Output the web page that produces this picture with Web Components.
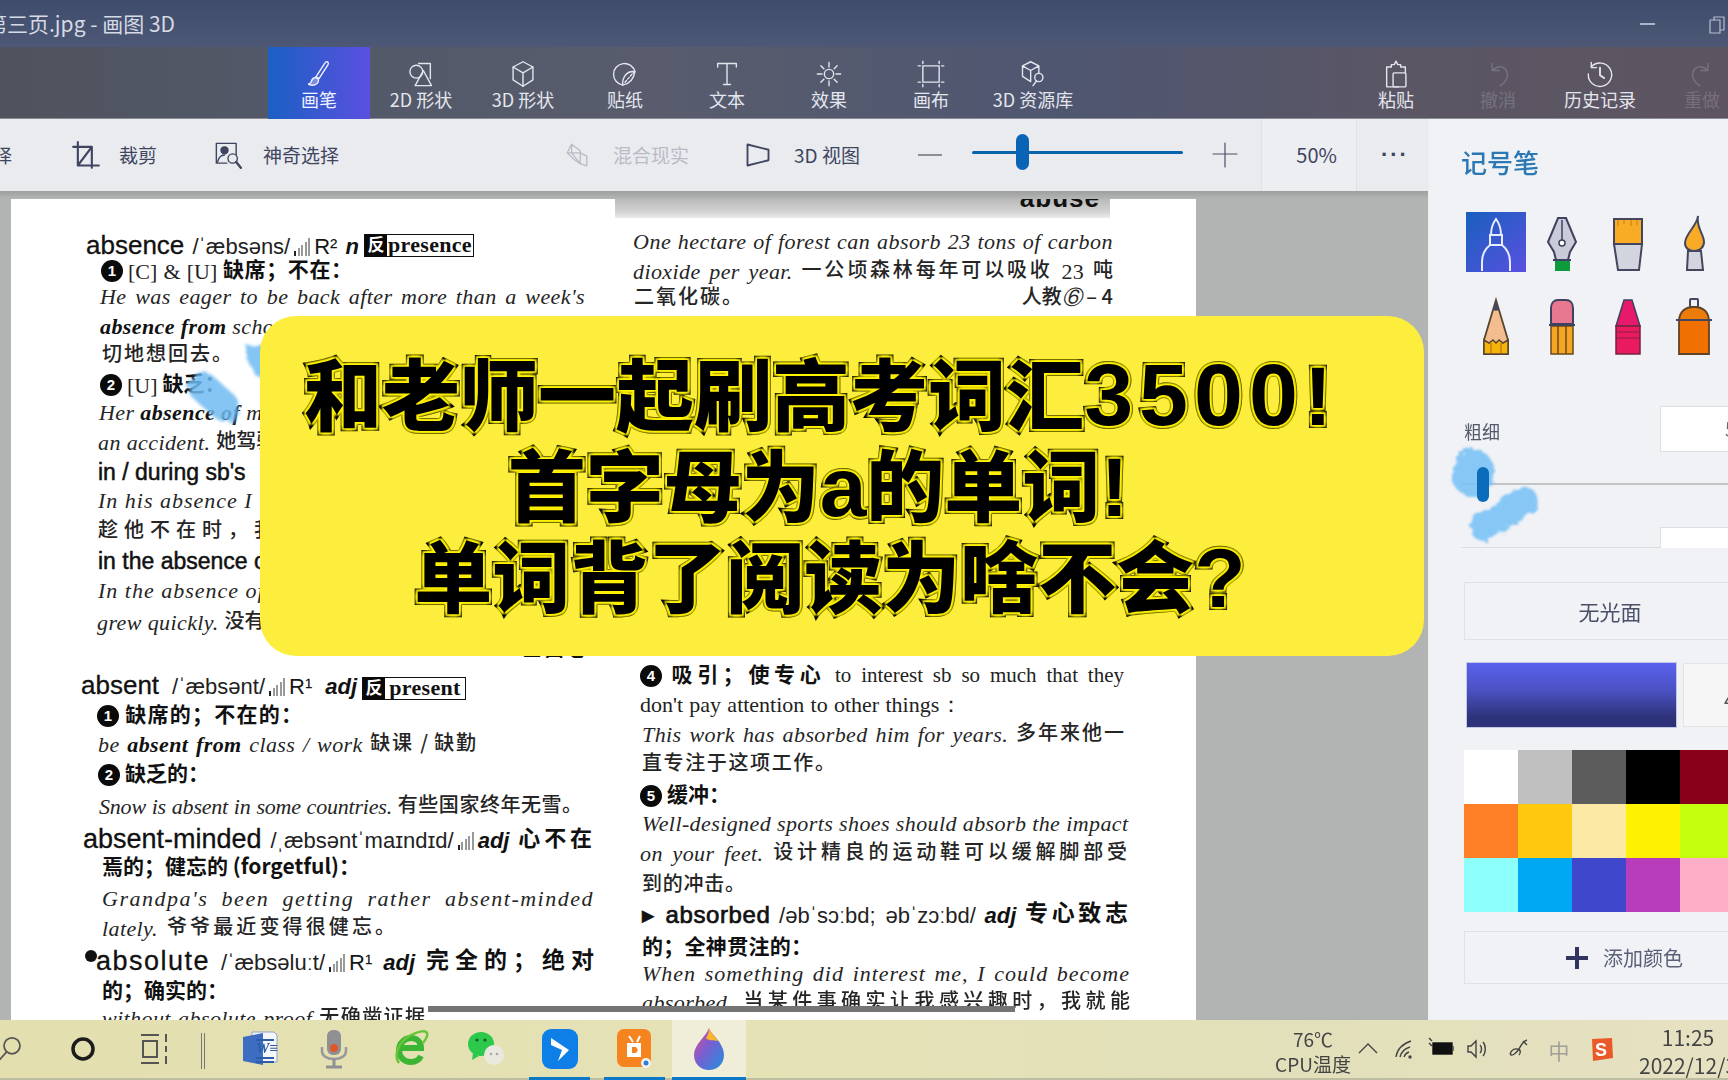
<!DOCTYPE html>
<html lang="zh"><head><meta charset="utf-8"><title>画图 3D</title>
<style>html,body{margin:0;padding:0;background:#b2b3b3;overflow:hidden}</style></head>
<body><paint-app></paint-app>
<script>
const UI='"Noto Sans CJK SC","Noto Sans",sans-serif';
const base=(css,html)=>`<style>${css}</style>${html}`;
function el(name,render){customElements.define(name,class extends HTMLElement{connectedCallback(){if(this.shadowRoot)return;this.attachShadow({mode:'open'}).innerHTML=render(this)}})}
const S=(inner,w=28,h=28,vb='0 0 24 24',extra='')=>`<svg width="${w}" height="${h}" viewBox="${vb}" fill="none" stroke="currentColor" stroke-width="1.2" stroke-linecap="round" stroke-linejoin="round" ${extra}>${inner}</svg>`;
const RI={
brush:S('<path d="M19 1.500c1.200.6 1.200 1.400.6 2.600L12 16l-2.600-1.600L17 2.600c.6-1 1.200-1.400 2-1.100z"/><path d="M9 15c-2 .2-3 1.300-3.400 3-.3 1.400-1.100 2.200-2.600 2.800 2.600 1 6 .9 7.700-1 1.200-1.500 1.100-3.200-.2-4z" fill="currentColor" fill-opacity=".35"/>'),
shape:S('<circle cx="8" cy="10" r="5.500"/><path d="M10 3h10v13"/><path d="M14 9l7 13H7z"/>'),
cube:S('<path d="M12 1.500l8.500 4.500v11L12 22.500 3.500 17V6z"/><path d="M3.500 6L12 11l8.500-5M12 11v11.500"/>'),
sticker:S('<path d="M20.500 10A9.300 9.300 0 1 0 10 21.500"/><path d="M20.500 10C14 9 9.500 14 10 21.500c5.500-1 9.500-5 10.500-11.500z"/><path d="M12 19l8-9" stroke-dasharray="2 1.500"/>'),
text:S('<path d="M4 6V3h16v3M12 3v18M9 21h6"/>'),
sun:S('<circle cx="12" cy="12" r="4"/><path d="M12 2v4M12 18v4M2 12h4M18 12h4M5 5l2.600 2.600M16.400 16.400L19 19M19 5l-2.600 2.600M7.600 16.400L5 19"/>'),
canvas:S('<rect x="5" y="5" width="14" height="14"/><path d="M5 1v2M19 1v2M5 21v2M19 21v2M1 5h2M1 19h2M21 5h2M21 19h2" stroke-dasharray="2 1"/>'),
lib:S('<path d="M10 1.500l7 3.500v6M3 5l7-3.500M3 5v9l7 4.500M3 5l7 4 7-4M10 9v9.500"/><circle cx="17" cy="15" r="3.500"/><path d="M15 18l-3 4"/>'),
paste:S('<path d="M8 6H4v17h10M8 6V4h2.500L12 1l1.500 3H16v2M16 6h4v5"/><rect x="9.500" y="11" width="11" height="12" rx="1"/>'),
undo:S('<path d="M7 9c6-6 13-3 13 4 0 4-3 7-6 9M7 9V3M7 9h6"/>'),
redo:S('<path d="M17 9c-6-6-13-3-13 4 0 4 3 7 6 9M17 9V3M17 9h-6"/>'),
hist:S('<path d="M4.500 6A10 10 0 1 1 2 12M4.500 2v4.500H9"/><path d="M12 6.500V13l3.500 2.500" stroke-width="1.600"/>')};
const AI={
crop:S('<path d="M5 1v20h18M1 5h16v18M17 5L5 21" stroke-width="1.800"/>',28,28),
magic:S('<path d="M19 12V2H2v17h9"/><circle cx="9" cy="8" r="3" fill="currentColor"/><path d="M3 18c1-4 3-6 6-6"/><circle cx="16" cy="15" r="4"/><path d="M19 18l4 5" stroke-width="2"/>',28,28),
mixed:S('<path d="M7 2l8 6v12l-6-4-6-6zM7 2v8l8 10M3 10h12l6 3v9l-6-2" />',26,26),
view:S('<path d="M3 3l18 4.500v9L3 21z" stroke-width="1.600"/>',28,28)};
el('rib-item',h=>base(`:host{display:flex;flex:none;width:102px;height:72px;flex-direction:column;align-items:center;color:${h.hasAttribute('off')?'rgba(230,232,240,.2)':'#e4e6ee'};font:400 18px/20px ${UI}}
:host([on]){background:linear-gradient(90deg,#1b60c2,#5a50e0);color:#f0f2ff}
.i{height:28px;margin-top:13px;display:flex}.l{margin-top:1px;white-space:nowrap}`,
`<span class="i">${RI[h.getAttribute('i')]}</span><span class="l"><slot></slot></span>`));
el('title-bar',()=>base(`:host{display:flex;align-items:center;height:47px;background:linear-gradient(180deg,#3f4c6c,#4c5875);color:#d6dae5;font:400 21px/47px ${UI};overflow:hidden;white-space:nowrap}
.t{margin-left:-14px;flex:none}.min{margin-left:1465px;width:15px;height:2px;background:#aeb4c4;flex:none}
.max{margin-left:52px;flex:none;color:#b8bdcc;display:flex}`,
`<span class="t">第三页.jpg - 画图 3D</span><span class="min"></span><span class="max">${S('<rect x="2" y="7" width="10" height="13"/><path d="M6 7V4h10v13h-4"/>',20,22,'0 0 18 22')}</span>`));
el('ribbon-bar',()=>base(`:host{display:flex;height:72px;padding-left:268px;overflow:hidden;background:linear-gradient(90deg,#4f535d 0,#525867 15%,#585c6d 38%,#4f5670 62%,#5b5664 82%,#5d5461 100%);box-shadow:inset 0 -1px 0 #8a8d98}.gap{flex:none;width:261px}`,
`<rib-item i="brush" on>画笔</rib-item><rib-item i="shape">2D 形状</rib-item><rib-item i="cube">3D 形状</rib-item><rib-item i="sticker">贴纸</rib-item><rib-item i="text">文本</rib-item><rib-item i="sun">效果</rib-item><rib-item i="canvas">画布</rib-item><rib-item i="lib">3D 资源库</rib-item><span class="gap"></span><rib-item i="paste">粘贴</rib-item><rib-item i="undo" off>撤消</rib-item><rib-item i="hist">历史记录</rib-item><rib-item i="redo" off>重做</rib-item>`));
el('act-item',h=>base(`:host{display:flex;flex:none;align-items:center;gap:${h.getAttribute('g')||23}px;margin-left:${h.getAttribute('m')||0}px;color:${h.hasAttribute('off')?'#b9bcc6':'#3f4560'};font:400 19px/24px ${UI};white-space:nowrap}`,
`<span style="display:flex">${h.getAttribute('i')?AI[h.getAttribute('i')]:''}</span><span><slot></slot></span>`));
el('action-bar',()=>base(`:host{display:flex;align-items:center;height:72px;background:#e9ebef;overflow:hidden;color:#3f4560;font:400 19px/24px ${UI};white-space:nowrap}
.cut{margin-left:-7px;flex:none;width:19px}
.minus{margin-left:58px;flex:none;width:24px;height:2px;background:#8b8e98}
.sl{margin-left:30px;flex:none;width:211px;height:3px;background:#0a64ac;border-radius:2px;position:relative;top:-3px;display:flex;align-items:center}
.th{margin-left:44px;width:13px;height:36px;border-radius:7px;background:#0a64b6;flex:none}
.plus{margin-left:29px;flex:none;display:flex;color:#4a4f66}
.pct{margin-left:23px;flex:none;width:75px;padding-right:19px;align-self:stretch;background:#eceef1;border:solid #dfe1e5;border-width:0 1px;display:flex;align-items:center;justify-content:flex-end;font-size:20px;color:#3f4560}
.dots{margin-left:24px;flex:none;letter-spacing:2px;font:700 22px/22px "Liberation Sans",sans-serif}`,
`<span class="cut">择</span><act-item i="crop" m="60" g="19">裁剪</act-item><act-item i="magic" m="57" g="21">神奇选择</act-item><act-item i="mixed" off m="225" g="23">混合现实</act-item><act-item i="view" m="55" g="22">3D 视图</act-item><span class="minus"></span><span class="sl"><span class="th"></span></span><span class="plus">${S('<path d="M12 1v24M0 12h24"/>',26,26,'0 0 24 26')}</span><span class="pct">50%</span><span class="dots">···</span>`));
el('sig-bars',()=>base(`:host{display:inline-flex;align-items:flex-end;gap:1.500px;height:18px;vertical-align:-2px;margin:0 4px}i{width:2px;background:#999}i:nth-child(-n+2){background:#222}`,
`<i style="height:5px"></i><i style="height:8px"></i><i style="height:11px"></i><i style="height:14px"></i><i style="height:18px"></i>`));
el('num-dot',()=>base(`:host{display:inline-flex;align-items:center;justify-content:center;width:22px;height:22px;border-radius:50%;background:#0a0a0a;color:#fff;font:700 15px/22px "Liberation Sans",sans-serif;font-style:normal;text-align:center;text-align-last:center;vertical-align:3px;margin-right:5px}`,`<slot></slot>`));
el('anto-tag',h=>base(`:host{display:inline-flex;align-items:stretch;height:23px;border:1.500px solid #111;box-sizing:border-box;width:${h.getAttribute('w')}px;margin-left:5px;vertical-align:middle;background:#fff;position:relative;top:${h.getAttribute('dy')||0}px;text-align-last:center}
.a{flex:none;width:22px;background:#0a0a0a;color:#fff;font:700 17px/20px ${UI};text-align:center;margin:-1px 0}.b{flex:1;text-align:center;font:700 22px/19px "Liberation Serif",serif;color:#111;font-style:normal;letter-spacing:.3px}`,
`<span class="a">反</span><span class="b"><slot></slot></span>`));
const CSS=`:host{display:block;flex:none}
.r{height:28px;line-height:28px;white-space:nowrap;color:#161616;font:700 20px/28px "Liberation Serif","Noto Sans CJK SC",serif;box-sizing:border-box}
.j{text-align:justify;text-align-last:justify}.w{text-justify:inter-word}
.h{font:400 26px/28px "Liberation Sans","Noto Sans CJK SC",sans-serif;color:#111;-webkit-text-stroke:.3px #111}
.h2{font-size:27px}
.ph{font:400 22px/28px "Liberation Sans",sans-serif;color:#222}
.g{font:400 22px/28px "Liberation Sans",sans-serif}
.s{font:400 23px/28px "Liberation Sans",sans-serif;color:#111;-webkit-text-stroke:.5px #111}
.ss{font:400 24px/28px "Liberation Sans",sans-serif;color:#111;-webkit-text-stroke:.7px #111;letter-spacing:.6px}
.ai{font:italic 700 22px/28px "Liberation Sans",sans-serif;color:#111}
.e{font:italic 400 22px/28px "Liberation Serif","Noto Sans CJK SC",serif;color:#252525;letter-spacing:.4px}
.e b{font-weight:700;color:#111}
.c{font:500 20px/28px "Noto Sans CJK SC",sans-serif;font-style:normal;color:#252525;letter-spacing:0;position:relative;top:-2px}
.d{font:700 21px/28px "Noto Sans CJK SC",sans-serif;color:#111;position:relative;top:-2px}
.t{font:400 22px/28px "Liberation Serif",serif;color:#222}
.sp{display:flex;justify-content:space-between;text-align-last:left}
.dot{display:inline-block;width:12px;height:12px;border-radius:50%;background:#111;vertical-align:8px;margin-right:-1px}`;
const LEFT=[
[245,86,388,`<span class="h">absence</span> <span class="ph">/ˈæbsəns/</span><sig-bars></sig-bars><span class="g">R²</span> <span class="ai">n</span><anto-tag w="110" dy="-4">presence</anto-tag>`,'w'],
[270,101,251,`<num-dot>1</num-dot><span class="t">[C] &amp; [U]</span> <span class="d">缺席；不在：</span>`,'w'],
[297,100,485,`<span class="e">He was eager to be back after more than a week's</span>`],
[327,100,0,`<span class="e"><b>absence from</b> school</span>`],
[355,102,0,`<span class="c" style="letter-spacing:2px">切地想回去。</span>`],
[384,100,0,`<num-dot>2</num-dot><span class="t">[U]</span> <span class="d">缺乏：</span>`],
[413,99,0,`<span class="e">Her <b>absence of</b> m</span>`],
[442,98,0,`<span class="e">an accident. <span class="c">她驾驶</span></span>`],
[472,98,0,`<span class="s">in / during sb's</span>`],
[501,98,0,`<span class="e" style="letter-spacing:1px">In his absence I l</span>`],
[531,98,0,`<span class="c" style="letter-spacing:6px">趁他不在时，我</span>`],
[561,98,0,`<span class="s">in the absence o</span>`],
[591,98,0,`<span class="e" style="letter-spacing:1px">In the absence of</span>`],
[622,97,0,`<span class="e">grew quickly. <span class="c">没有</span></span>`],
[650,470,116,`<span class="d" style="font-size:19px">2017 全国卷</span>`,'w'],
[685,81,385,`<span class="h">absent</span> <span class="ph">/ˈæbsənt/</span><sig-bars></sig-bars><span class="g">R¹</span> <span class="ai">adj</span><anto-tag w="104" dy="-1">present</anto-tag>`,'w'],
[715,97,205,`<num-dot>1</num-dot><span class="d">缺席的；不在的：</span>`],
[744,98,378,`<span class="e">be <b>absent from</b> class / work <span class="c">缺课 / 缺勤</span></span>`],
[774,98,0,`<num-dot>2</num-dot><span class="d">缺乏的：</span>`],
[806,99,483,`<span class="e" style="letter-spacing:-.2px">Snow is absent in some countries. <span class="c">有些国家终年无雪。</span></span>`,'w'],
[838,83,509,`<span class="h h2">absent-minded</span> <span class="ph">/ˌæbsəntˈmaɪndɪd/</span><sig-bars></sig-bars><span class="ai">adj</span> <span class="d" style="font-size:22px">心不在</span>`,'w'],
[867,102,258,`<span class="d">焉的；健忘的 (forgetful)：</span>`,'w'],
[899,102,492,`<span class="e" style="letter-spacing:1.500px">Grandpa's been getting rather absent-minded</span>`],
[928,102,293,`<span class="e">lately. <span class="c">爷爷最近变得很健忘。</span></span>`],
[960,85,509,`<span class="h h2" style="letter-spacing:1.500px"><span class="dot"></span>absolute</span> <span class="ph">/ˈæbsəluːt/</span><sig-bars></sig-bars><span class="g">R¹</span> <span class="ai">adj</span> <span class="d" style="font-size:23px">完全的；绝对</span>`,'w'],
[991,102,126,`<span class="d">的；确实的：</span>`],
[1018,102,323,`<span class="e">without absolute proof <span class="c">无确凿证据</span></span>`]];
const RIGHT=[
[242,633,480,`<span class="e" style="letter-spacing:.5px">One hectare of forest can absorb 23 tons of carbon</span>`],
[271,633,480,`<span class="e">dioxide per year. <span class="c">一公顷森林每年可以吸收</span> <span style="font-style:normal">23</span> <span class="c">吨</span></span>`],
[298,634,479,`<span class="sp"><span class="c" style="letter-spacing:2px">二氧化碳。</span><span class="c">人教<i style="font-family:'Liberation Serif'">⑥</i> – 4</span></span>`,'n'],
[675,640,484,`<num-dot>4</num-dot><span class="d">吸引；使专心</span> <span class="t" style="font-size:21px;position:relative;top:-2px">to interest sb so much that they</span>`,'w'],
[705,640,322,`<span class="t">don't pay attention to other things：</span>`],
[734,642,482,`<span class="e">This work has absorbed him for years. <span class="c">多年来他一</span></span>`],
[764,642,193,`<span class="c">直专注于这项工作。</span>`],
[795,640,85,`<num-dot>5</num-dot><span class="d">缓冲：</span>`,'w'],
[824,642,485,`<span class="e">Well-designed sports shoes should absorb the impact</span>`],
[853,640,487,`<span class="e">on your feet. <span class="c">设计精良的运动鞋可以缓解脚部受</span></span>`],
[885,642,103,`<span class="c">到的冲击。</span>`],
[913,642,486,`<span class="ss">▸ absorbed</span> <span class="ph">/əbˈsɔːbd; əbˈzɔːbd/</span> <span class="ai">adj</span> <span class="d" style="font-size:23px">专心致志</span>`,'w'],
[947,642,170,`<span class="d">的；全神贯注的：</span>`],
[974,642,488,`<span class="e" style="letter-spacing:1px">When something did interest me, I could become</span>`],
[1002,642,488,`<span class="e">absorbed. <span class="c">当某件事确实让我感兴趣时，我就能</span></span>`]];
function rows(list,colX,startY){let prev=null,out='';for(const [y,x,w,h,f] of list){const m=prev===null?y-14-startY:y-prev-28;prev=y;
const cls=f=='n'?'':(w?' j':'')+(f=='w'?' w':'');
out+=`<div class="r${cls}" style="margin-top:${m}px;margin-left:${x-colX}px;${w?`width:${w}px`:''}">${h}</div>`}return out}
el('dict-col',h=>{const l=h.getAttribute('side')=='l';return base(CSS,rows(l?LEFT:RIGHT,l?11:611,l?199:219))});
const ROUGH=(id,d)=>`<filter id="${id}" filterUnits="userSpaceOnUse" x="0" y="0" width="100%" height="100%"><feTurbulence type="fractalNoise" baseFrequency=".12" numOctaves="3" seed="4"/><feDisplacementMap in="SourceGraphic" scale="10"/><feGaussianBlur stdDeviation="${d}"/></filter>`;
el('doc-canvas',()=>base(`:host{display:block;position:relative;height:829px;background:#b2b3b3;overflow:hidden;padding:8px 0 0 11px;box-sizing:border-box}
:host::before{content:"";position:absolute;left:0;right:0;top:0;height:8px;background:linear-gradient(#9d9e9e,#b4b5b5)}
.paper{position:relative;width:1185px;height:821px;background:#fff;overflow:hidden;display:flex}
.lc{flex:none;width:600px}.rc{flex:none;width:585px;padding-top:20px;box-sizing:border-box}
.band{position:absolute;left:604px;top:0;width:495px;height:19px;background:linear-gradient(180deg,#b9b9b9,#d4d4d4 70%,#ececec);display:flex;justify-content:flex-end;overflow:hidden;padding-right:10px;box-sizing:border-box;font:700 26px/1 "Liberation Sans",sans-serif;color:#111}
.band span{margin-top:-14px;letter-spacing:1px}
.sc{position:absolute;left:0;top:0;pointer-events:none}
.thumb{position:absolute;left:428px;top:815px;width:587px;height:6px;background:#747474;z-index:3}`,
`<div class="paper"><div class="lc"><dict-col side="l"></dict-col></div><div class="rc"><dict-col side="r"></dict-col></div><div class="band"><span>abuse</span></div>
<svg class="sc" width="320" height="260" fill="none" stroke-linecap="round"><defs>${ROUGH('b',1.5)}</defs><g filter="url(#b)" stroke="#6fbbf2" opacity=".85"><path d="M192 188L214 208" stroke-width="30"/><path d="M246 155L254 170" stroke-width="22"/></g></svg>
</div><div class="thumb"></div>`));
const TOOL={
pen:`<path d="M26 6h8l10 24-6 10-2 8H24l-2-8-6-10z" fill="#c9cbd8" stroke="#3f4160" stroke-width="2"/><path d="M30 8v20" stroke="#3f4160" stroke-width="1.500"/><circle cx="30" cy="31" r="3" fill="#fff" stroke="#3f4160" stroke-width="1.500"/><rect x="23" y="48" width="15" height="11" fill="#0d9b3e"/><path d="M21 48h18" stroke="#3f4160" stroke-width="2"/>`,
flat:`<path d="M16 7h28v25H16z" fill="#f8ac26" stroke="#44465f" stroke-width="2"/><path d="M16 32h28l-3 26H20z" fill="#d2d4de" stroke="#44465f" stroke-width="2"/><path d="M20 8v6M26 8v4M33 8v6M39 8v5" stroke="#c77f10"/>`,
water:`<path d="M34 4C33 14 21 22 21 31c0 5 4 8 9 8s10-3 10-9c0-8-8-14-6-26z" fill="#f9ab28" stroke="#44465f" stroke-width="2"/><path d="M24 39h13l2 19H23z" fill="#d2d4de" stroke="#44465f" stroke-width="2"/>`,
pencil:`<path d="M30 4l12 40v14H18V44z" fill="#f3bd90" stroke="#59462f" stroke-width="1.800"/><path d="M27 14l3-10 3 10c-2 1-4 1-6 0z" fill="#44465f"/><path d="M18 58V44l5 3 4-3 3 3 3-3 4 3 5-3v14z" fill="#f7b30c" stroke="#59462f" stroke-width="1.500"/><path d="M25 47v11M35 47v11" stroke="#a86b10"/>`,
eraser:`<path d="M19 28V12c0-5 3-8 7-8h8c4 0 7 3 7 8v16z" fill="#e87790" stroke="#3f4160" stroke-width="2"/><path d="M19 30h22v28H19z" fill="#f5a623" stroke="#6b4a1d" stroke-width="1.500"/><path d="M26 30v28M34 30v28" stroke="#6b4a1d" stroke-width="1.500"/><path d="M17 29h26" stroke="#3f4160" stroke-width="2"/>`,
crayon:`<path d="M26 4h8l8 26H18z" fill="#e8186a" stroke="#3f4160" stroke-width="1.500"/><path d="M18 30h24v28H18z" fill="#ea1a60" stroke="#74233f" stroke-width="1.500"/><path d="M18 36h24M18 42h24" stroke="#8c1e42" stroke-width="1.200"/>`,
spray:`<rect x="26" y="3" width="8" height="8" rx="1" fill="none" stroke="#44465f" stroke-width="2"/><path d="M15 24c1-9 7-13 15-13s14 4 15 13z" fill="#ec7c0a" stroke="#5f4327" stroke-width="1.800"/><path d="M15 24h30v34H15z" fill="#f07000" stroke="#5f4327" stroke-width="1.800"/><path d="M12 24h36" stroke="#44465f" stroke-width="2"/>`};
el('tool-cell',h=>base(`:host{display:flex;width:60px;height:60px;flex:none}:host([on]){background:linear-gradient(135deg,#1860bd,#5a50e0)}`,
h.hasAttribute('on')?`<svg width="60" height="60" viewBox="0 0 60 60" fill="none" stroke="#e8ecff" stroke-width="2"><path d="M30 7c-3 4-5 9-5 16h10c0-7-2-12-5-16zM24 23h12v10H24zM16 59V50c0-8 3-13 8-17M44 59V50c0-8-3-13-8-17"/></svg>`:`<svg width="60" height="60" viewBox="0 0 60 60">${TOOL[h.getAttribute('t')]}</svg>`));
el('side-panel',()=>{const pal=['#fff','#c0c0c0','#5c5c5c','#000','#880019','#ff7f27','#ffc90e','#fde9a6','#fff200','#c4ff0e','#8cfffb','#00a8f3','#3f48cc','#b83dba','#ffaec8'];
return base(`:host{display:block;height:901px;background:#f0f2f5;overflow:hidden;padding-left:33px;font-family:${UI};color:#4a4f68;box-sizing:border-box;box-shadow:inset 1px 0 0 #eceef0}
.inner{width:300px}
h2{margin:24px 0 0 0;font:500 26px/38px ${UI};color:#2b78b5}
.grid{display:grid;grid-template-columns:repeat(4,60px);column-gap:6px;row-gap:24px;margin:31px 0 0 5px}
.clip{height:141px;margin-top:50px;position:relative;clip-path:inset(0 -100px 0 -100px);border-bottom:1px solid #dcdde0}
.lab{font:400 18px/26px ${UI};color:#555a6a;padding:12px 0 0 3px}
.in{position:absolute;left:199px;width:120px;background:#fff;border:1px solid #dedfe3;box-sizing:border-box;font:400 20px/44px ${UI};padding-left:64px;color:#666}
.track{position:absolute;left:0;top:77px;width:300px;height:2px;background:#c3c4c6}
.th{position:absolute;left:16px;top:61px;width:12px;height:35px;border-radius:6px;background:#0b6cbc}
.sc{position:absolute;left:-20px;top:30px}
.drop{margin:34px 0 0 3px;height:58px;box-sizing:border-box;border:1px solid #e0e1e4;font:400 21px/56px ${UI};text-align:center;width:292px}
.col{display:flex;margin:23px 0 0 6px;gap:7px}
.sw{flex:none;width:209px;height:64px;background:linear-gradient(180deg,#5a62ee,#4a50c0 45%,#2e3278 85%);outline:1px solid #c5c8e4}
.hex{flex:none;width:80px;height:64px;background:#f6f6f6;border:1px solid #e3e4e6;box-sizing:border-box;font:400 20px/72px ${UI};padding-left:40px;color:#555}
.pal{display:grid;grid-template-columns:repeat(5,54px);grid-auto-rows:54px;margin:23px 0 0 3px}
.add{margin:19px 0 0 3px;height:53px;width:292px;box-sizing:border-box;border:1px solid #e0e1e4;display:flex;align-items:center;gap:14px;padding-left:100px;font:400 20px/26px ${UI};color:#5a6078}`,
`<div class="inner"><h2>记号笔</h2>
<div class="grid"><tool-cell on></tool-cell><tool-cell t="pen"></tool-cell><tool-cell t="flat"></tool-cell><tool-cell t="water"></tool-cell><tool-cell t="pencil"></tool-cell><tool-cell t="eraser"></tool-cell><tool-cell t="crayon"></tool-cell><tool-cell t="spray"></tool-cell></div>
<div class="clip"><div class="lab">粗细</div><div class="in" style="top:0;height:46px">5</div><div class="in" style="top:121px;height:40px"></div><div class="track"></div>
<svg class="sc" width="120" height="130" fill="none" stroke-linecap="round"><defs>${ROUGH('p',1.2)}</defs><g filter="url(#p)" stroke="#7cc2f6" opacity=".9"><path d="M32 33L32 41" stroke-width="40"/><path d="M43 91L83 65" stroke-width="28"/></g></svg><div class="th"></div></div>
<div class="drop">无光面</div>
<div class="col"><div class="sw"></div><div class="hex">4</div></div>
<div class="pal">${pal.map(c=>`<i style="background:${c}"></i>`).join('')}</div>
<div class="add"><svg width="24" height="24" viewBox="0 0 24 24"><path d="M12 1v22M1 12h22" stroke="#2f3560" stroke-width="4"/></svg><span>添加颜色</span></div></div>`)});
const TB={
search:`<svg width="40" height="40" viewBox="0 0 40 40" fill="none" stroke="#555" stroke-width="2.200"><circle cx="20" cy="16" r="10"/><path d="M13 24L3 35"/></svg>`,
circle:`<svg width="30" height="30" viewBox="0 0 30 30" fill="none" stroke="#1c1c1c" stroke-width="3.500"><circle cx="15" cy="15" r="10"/></svg>`,
tv:`<svg width="32" height="34" viewBox="0 0 32 34" fill="none" stroke="#555" stroke-width="2"><path d="M2 3h18M2 31h18M4 9h14v16H4zM27 2v8M27 14v6M27 24v8"/></svg>`,
word:`<svg width="36" height="38" viewBox="0 0 36 38"><path d="M10 2h22l3 3v27H10z" fill="#f4f6fb" stroke="#8ea4c8"/><path d="M1 7l20-4v32L1 31z" fill="#3c6dc0"/><path d="M14 10h18M14 28h18M14 32h18" stroke="#2f5ca8" stroke-width="2"/><text x="14" y="23" font-family="Liberation Serif" font-style="italic" font-weight="700" font-size="15" fill="#2f5ca8">W≡</text></svg>`,
mic:`<svg width="28" height="40" viewBox="0 0 28 40"><rect x="7" y="1" width="14" height="25" rx="6" fill="#8f9094"/><circle cx="14" cy="19" r="4" fill="#dd5a28"/><path d="M2 18v4c0 5 5 8 12 8s12-3 12-8v-4" fill="none" stroke="#99999b" stroke-width="2.500"/><path d="M14 30v7M6 38h16" stroke="#8f9094" stroke-width="3"/></svg>`,
ie:`<svg width="36" height="40" viewBox="0 0 36 40" fill="none"><path d="M7 19h21c0-6-4-10-10-10S6 14 6 21s5 12 12 12c5 0 8-2 10-6" stroke="#3cb534" stroke-width="6"/><path d="M6 34C0 26 6 12 18 6c8-4 15-5 16-2 1 2-1 6-4 10" stroke="#6bc53a" stroke-width="2.500"/></svg>`,
wx:`<svg width="40" height="36" viewBox="0 0 40 36"><ellipse cx="15" cy="13" rx="13" ry="12" fill="#2cc94d"/><path d="M7 22l-1 7 7-4z" fill="#2cc94d"/><ellipse cx="28" cy="24" rx="10" ry="10" fill="#e9e9df"/><circle cx="25" cy="23" r="1.300" fill="#aaa"/><circle cx="31" cy="23" r="1.300" fill="#aaa"/><circle cx="11" cy="9" r="1.600" fill="#145f26"/><circle cx="19" cy="9" r="1.600" fill="#145f26"/></svg>`,
blue:`<svg width="36" height="40" viewBox="0 0 36 40"><rect width="36" height="40" rx="9" fill="#0f7fe8"/><path d="M9 9l18 12-11 11 4-11-11-5z" fill="#fff"/></svg>`,
orange:`<svg width="36" height="40" viewBox="0 0 36 40"><rect width="34" height="38" rx="7" fill="#f5841f"/><path d="M10 14h14v14H10z" fill="#fff"/><path d="M15 18h4l2 3-2 3h-4z" fill="#f5841f"/><path d="M12 7l4 6M23 7l-3 6" stroke="#fff" stroke-width="2"/><circle cx="29" cy="34" r="5" fill="#f3f3f3"/><circle cx="29" cy="34" r="2.500" fill="#2a7fd8"/></svg>`,
drop:`<svg width="34" height="44" viewBox="0 0 34 44"><defs><linearGradient id="pd" x1="0" y1="0" x2="1" y2="1"><stop offset="0" stop-color="#e74d8e"/><stop offset=".45" stop-color="#7a5ed0"/><stop offset="1" stop-color="#1e90e0"/></linearGradient></defs><path d="M17 1c1 6 15 14 15 27 0 9-7 15-15 15S2 37 2 28C2 17 14 10 17 1z" fill="url(#pd)"/><path d="M17 1c1 4 6 8 9 13-5-1-10 0-12-3 2-3 3-6 3-10z" fill="#f7b42c"/></svg>`,
s:`<svg width="26" height="26" viewBox="0 0 26 26"><path d="M4 3l20-1 1 20-20 3z" fill="#ea5a28"/><text x="7" y="20" font-family="Liberation Sans" font-weight="700" font-size="18" fill="#fff">S</text></svg>`};
const TRAY={chev:`<path d="M2 16L11 7l9 9"/>`,wifi:`<path d="M3 20C4 13 9 7 18 4M7 20c1-5 4-8 10-10M11 20c1-3 2-4 5-5"/><circle cx="17" cy="20" r="1" fill="#333"/>`,
bat:`<path d="M0 6l3 3M0 1l3 3" stroke-width="1.500"/><rect x="4" y="6" width="19" height="11" fill="#111" stroke="#111"/><path d="M24 9v5"/>`,
vol:`<path d="M3 9v6h3l5 5V4L6 9zM15 8c2 2 2 6 0 8M18 5c3 3 3 11 0 14"/>`,
pen2:`<path d="M20 3c-3 1-6 5-8 9-2 3-6 7-8 6-2-2 2-7 6-6 4 0 4 4 2 6M16 4l4 4"/>`};
const tray=k=>`<svg width="26" height="24" viewBox="0 0 24 24" fill="none" stroke="#444" stroke-width="1.400">${TRAY[k]}</svg>`;
el('task-slot',h=>base(`:host{display:flex;flex:none;align-items:center;justify-content:center;height:57px;width:${h.getAttribute('w')||74}px;margin-left:${h.getAttribute('m')||0}px;border-bottom:3px solid transparent}
:host([run]){border-bottom-color:#0c78c8}:host([act]){background:#f0eed9}`,`<slot></slot>`));
el('task-bar',()=>base(`:host{display:flex;height:60px;background:linear-gradient(90deg,#e3dfaf,#e5e2b6 45%,#e2e0ba 75%,#e6e1c2);overflow:hidden;align-items:flex-start;box-shadow:inset 0 -2px 0 #bdbda2;font:400 19px/25px ${UI};color:#444;white-space:nowrap}
.sep{flex:none;width:4px;height:36px;border:solid #777;border-width:0 1.500px;box-sizing:border-box;margin:13px 0 0 11px}
.tmp{flex:none;margin-left:517px;width:100px;text-align:center;padding-top:6px}
.ti{display:flex;flex:none;width:36px;height:57px;align-items:center;justify-content:center}
.zh{flex:none;width:40px;text-align:center;line-height:60px;font-size:21px;color:#a0a09a}
.clock{flex:none;margin-left:20px;font-size:21px;line-height:28px;padding-top:3px;text-align:center}`,
`<task-slot w="32" m="-4">${TB.search}</task-slot><task-slot w="74" m="18">${TB.circle}</task-slot><task-slot w="70" m="0">${TB.tv}</task-slot><span class="sep"></span><task-slot w="74" m="18">${TB.word}</task-slot><task-slot m="0">${TB.mic}</task-slot><task-slot m="3">${TB.ie}</task-slot><task-slot m="1">${TB.wx}</task-slot><task-slot run m="6" w="61">${TB.blue}</task-slot><task-slot run m="14" w="61">${TB.orange}</task-slot><task-slot run act m="7">${TB.drop}</task-slot>
<span class="tmp">76℃<br>CPU温度</span><span class="ti" style="margin-left:-12px">${tray('chev')}</span><span class="ti">${tray('wifi')}</span><span class="ti">${tray('bat')}</span><span class="ti">${tray('vol')}</span><span class="ti" style="margin-left:6px">${tray('pen2')}</span><span class="zh" style="margin-left:2px">中</span><span class="ti" style="margin-left:4px">${TB.s}</span><span class="clock">11:25<br>2022/12/3</span>`));
el('quiz-banner',()=>base(`:host{position:absolute;left:260px;top:316px;width:1164px;height:340px;box-sizing:border-box;padding:30px 48px 0 0;background:#fdee3e;border-radius:36px;display:flex;flex-direction:column;align-items:center;z-index:5}
div{height:91px;line-height:91px;white-space:nowrap;font-family:"Noto Sans CJK SC",sans-serif;font-weight:900;font-size:78px;color:#000;-webkit-text-stroke:6px #000;paint-order:stroke fill;text-shadow:0 0 2px #fff200,2px 2px 2px #fff200,-2px -2px 2px #fff200,2px -2px 2px #fff200,-2px 2px 2px #fff200}
div.l3{padding-left:24px}
b{font:700 88px/91px "Liberation Sans",sans-serif;letter-spacing:6px}u{text-decoration:none;font:700 84px/91px "Liberation Sans",sans-serif}`,
`<div>和老师一起刷高考词汇<b>3500</b><u>!</u></div><div>首字母为<u>a</u>的单词<u>!</u></div><div class="l3">单词背了阅读为啥不会<u>?</u></div>`));
el('paint-app',()=>base(`:host{display:block;position:relative;width:1728px;height:1080px;overflow:hidden}
.ui{display:grid;grid-template-columns:1428px 300px;grid-template-rows:47px 72px 72px 829px 60px;width:1728px;height:1080px;filter:blur(.5px)}
title-bar,ribbon-bar,task-bar{grid-column:1/3;min-width:0}
side-panel{grid-column:2;grid-row:3/5}action-bar{grid-column:1;grid-row:3}doc-canvas{grid-column:1;grid-row:4}`,
`<div class="ui"><title-bar></title-bar><ribbon-bar></ribbon-bar><action-bar></action-bar><side-panel></side-panel><doc-canvas></doc-canvas><task-bar></task-bar></div><quiz-banner></quiz-banner>`));
</script></body></html>
